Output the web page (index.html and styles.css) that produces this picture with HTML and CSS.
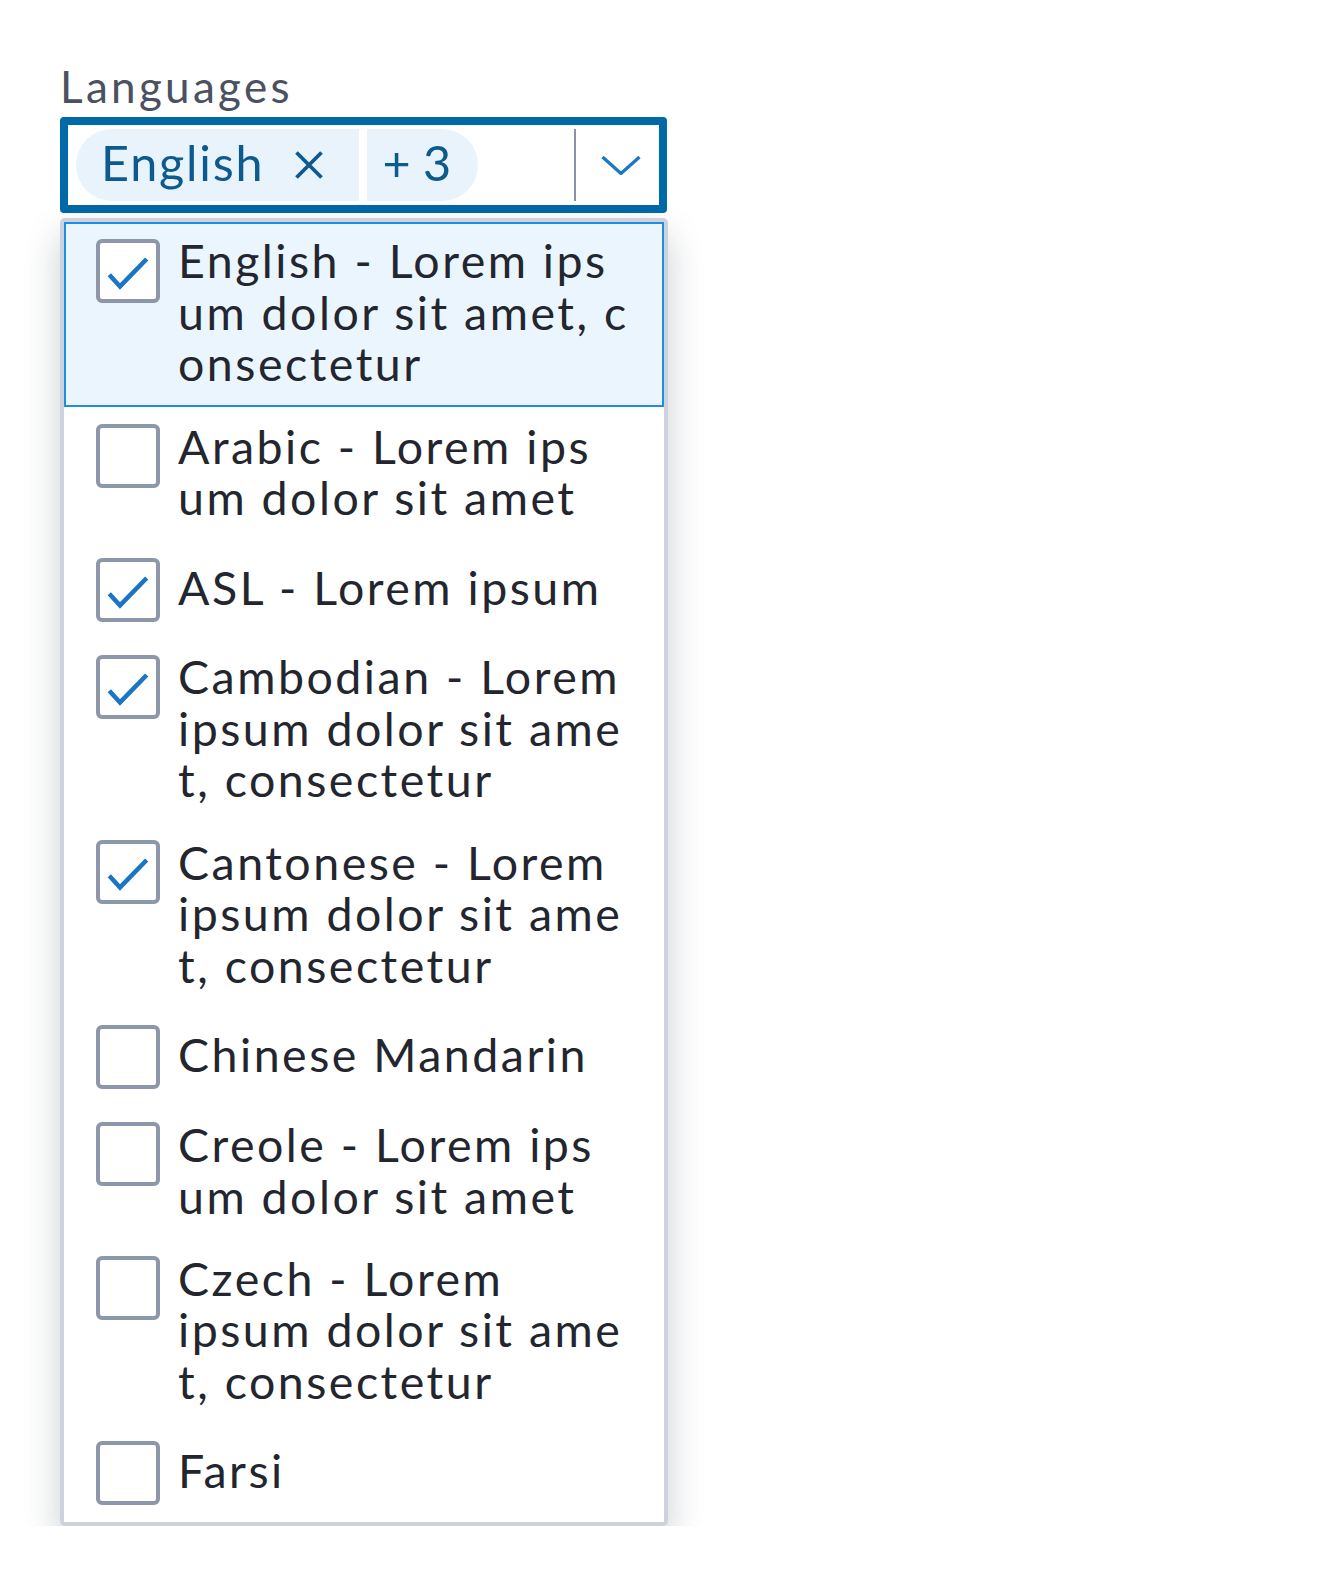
FILE: index.html
```html
<!DOCTYPE html>
<html lang="en">
<head>
<meta charset="utf-8">
<title>Languages</title>
<link rel="stylesheet" href="styles.css">
</head>
<body>
<div class="field">
  <div class="label">Languages</div>
  <div class="select">
    <div class="chips">
      <span class="chip chip-main">English<span class="chip-x"><svg viewBox="0 0 30 30" width="30" height="30"><path d="M2.5 2.5L27.5 27.5M27.5 2.5L2.5 27.5" fill="none" stroke="#0c5a8e" stroke-width="3.8"/></svg></span></span>
      <span class="chip chip-more">+ 3</span>
    </div>
    <span class="sep"></span>
    <span class="caret"><svg viewBox="0 0 40 20" width="40" height="20"><path d="M1.5 2L20 18.5L38.5 2" fill="none" stroke="#1f77c4" stroke-width="3.3"/></svg></span>
  </div>
  <ul class="menu">
    <li class="opt active"><span class="cb"><svg viewBox="0 0 56 56" width="56" height="56"><path d="M9.3 31.7L20 43.4L46.7 16" fill="none" stroke="#1b74c4" stroke-width="4.5"/></svg></span><span class="txt">English - Lorem ips<br>um dolor sit amet, c<br>onsectetur</span></li>
    <li class="opt"><span class="cb"></span><span class="txt">Arabic - Lorem ips<br>um dolor sit amet</span></li>
    <li class="opt"><span class="cb"><svg viewBox="0 0 56 56" width="56" height="56"><path d="M9.3 31.7L20 43.4L46.7 16" fill="none" stroke="#1b74c4" stroke-width="4.5"/></svg></span><span class="txt">ASL - Lorem ipsum</span></li>
    <li class="opt"><span class="cb"><svg viewBox="0 0 56 56" width="56" height="56"><path d="M9.3 31.7L20 43.4L46.7 16" fill="none" stroke="#1b74c4" stroke-width="4.5"/></svg></span><span class="txt">Cambodian - Lorem<br>ipsum dolor sit ame<br>t, consectetur</span></li>
    <li class="opt"><span class="cb"><svg viewBox="0 0 56 56" width="56" height="56"><path d="M9.3 31.7L20 43.4L46.7 16" fill="none" stroke="#1b74c4" stroke-width="4.5"/></svg></span><span class="txt">Cantonese - Lorem<br>ipsum dolor sit ame<br>t, consectetur</span></li>
    <li class="opt"><span class="cb"></span><span class="txt">Chinese Mandarin</span></li>
    <li class="opt"><span class="cb"></span><span class="txt">Creole - Lorem ips<br>um dolor sit amet</span></li>
    <li class="opt"><span class="cb"></span><span class="txt">Czech - Lorem<br>ipsum dolor sit ame<br>t, consectetur</span></li>
    <li class="opt"><span class="cb"></span><span class="txt">Farsi</span></li>
  </ul>
</div>
</body>
</html>
```
FILE: styles.css
```css
body {
  margin: 0;
  background: #ffffff;
  font-family: Lato, "Open Sans", sans-serif;
}

.field {
  padding: 61.2px 0 0 60px;
  width: 608px;
}

.label {
  font-size: 44px;
  letter-spacing: 3.3px;
  line-height: 51.6px;
  color: #4a5160;
  margin-bottom: 4px;
}

.select {
  box-sizing: border-box;
  width: 607px;
  height: 96px;
  border: 8px solid #0069a8;
  border-radius: 4px;
  display: flex;
  align-items: center;
  padding-left: 8px;
}

.chips {
  flex: 1;
  display: flex;
  gap: 8px;
}

.chip {
  box-sizing: border-box;
  height: 72px;
  padding-bottom: 6px;
  display: flex;
  align-items: center;
  background: #e9f3fc;
  color: #0c5a8e;
  font-size: 48.5px;
  line-height: 1.2;
}

.chip-main {
  border-radius: 36px 0 0 36px;
  padding-left: 25px;
  padding-right: 35px;
  letter-spacing: 1.8px;
}

.chip-x {
  display: flex;
  margin-left: 30px;
  margin-top: 6px;
}

.chip-more {
  border-radius: 0 36px 36px 0;
  padding-left: 15px;
  padding-right: 27px;
}

.sep {
  width: 2px;
  height: 72px;
  background: #8a93a6;
}

.caret {
  display: flex;
  padding: 0 18px 0 25px;
}

.caret svg,
.chip-x svg,
.cb svg {
  display: block;
}

.menu {
  list-style: none;
  margin: 5px 0 0;
  padding: 0;
  box-sizing: border-box;
  width: 608px;
  border: 4px solid #cdd2dc;
  border-radius: 5px;
  background: #ffffff;
  box-shadow: 0 18px 36px rgba(20, 30, 50, 0.22);
}

.opt {
  display: flex;
  align-items: flex-start;
  gap: 18px;
  padding: 11.4px 30px 15.2px;
  border: 2px solid transparent;
  font-size: 46.5px;
  letter-spacing: 2.5px;
  line-height: 51.6px;
  color: #23262e;
}

.opt.active {
  background: #eaf5fe;
  border-color: #1c8fe0;
}

.cb {
  flex: none;
  box-sizing: border-box;
  width: 64px;
  height: 64px;
  margin: 3.4px 0 -1px;
  border: 4px solid #8e96aa;
  border-radius: 6px;
  background: #ffffff;
}

.txt {
  min-height: 66.4px;
  display: flex;
  align-items: center;
  white-space: nowrap;
}
```
